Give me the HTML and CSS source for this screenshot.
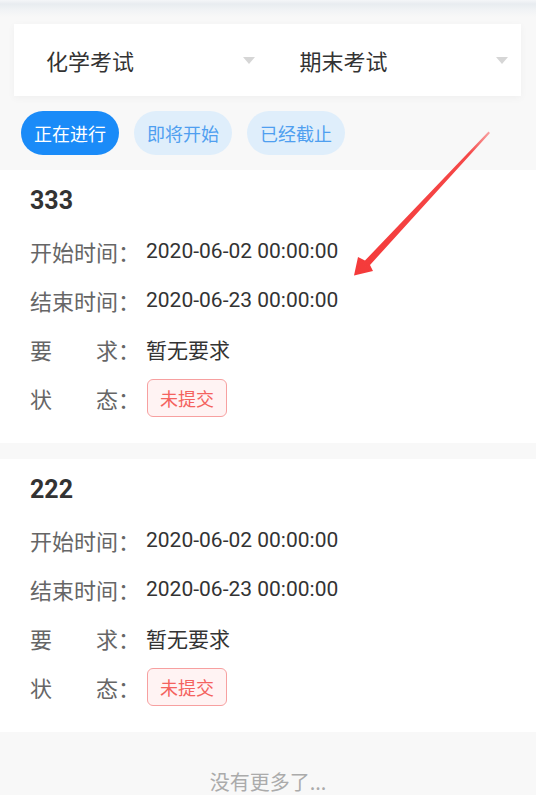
FILE: index.html
```html
<!DOCTYPE html>
<html lang="zh-CN">
<head>
<meta charset="utf-8">
<title>考试列表</title>
<link rel="stylesheet" href="styles.css">
</head>
<body>
<div class="page">
  <div class="filter">
    <div class="select"><span>化学考试</span><i class="caret"></i></div>
    <div class="select"><span>期末考试</span><i class="caret"></i></div>
  </div>
  <div class="tabs">
    <span class="tab active">正在进行</span>
    <span class="tab">即将开始</span>
    <span class="tab">已经截止</span>
  </div>

  <div class="card">
    <div class="title">333</div>
    <div class="rows">
      <div class="row"><span class="label"><span class="name">开始时间</span>：</span><span class="value">2020-06-02 00:00:00</span></div>
      <div class="row"><span class="label"><span class="name">结束时间</span>：</span><span class="value">2020-06-23 00:00:00</span></div>
      <div class="row"><span class="label"><span class="name">要求</span>：</span><span class="value">暂无要求</span></div>
      <div class="row"><span class="label"><span class="name">状态</span>：</span><span class="badge">未提交</span></div>
    </div>
  </div>

  <div class="card">
    <div class="title">222</div>
    <div class="rows">
      <div class="row"><span class="label"><span class="name">开始时间</span>：</span><span class="value">2020-06-02 00:00:00</span></div>
      <div class="row"><span class="label"><span class="name">结束时间</span>：</span><span class="value">2020-06-23 00:00:00</span></div>
      <div class="row"><span class="label"><span class="name">要求</span>：</span><span class="value">暂无要求</span></div>
      <div class="row"><span class="label"><span class="name">状态</span>：</span><span class="badge">未提交</span></div>
    </div>
  </div>

  <div class="more">没有更多了...</div>

  <svg class="arrow" width="536" height="795" viewBox="0 0 536 795" aria-hidden="true">
    <defs>
      <linearGradient id="ag" x1="489" y1="132" x2="354" y2="275" gradientUnits="userSpaceOnUse">
        <stop offset="0" stop-color="#f8a0a0"/>
        <stop offset="0.15" stop-color="#f54848"/>
        <stop offset="1" stop-color="#f43a3a"/>
      </linearGradient>
    </defs>
    <polygon fill="url(#ag)" points="488.5,131.5 490,133 370,265 373,271 354,275.5 358,257 365,260.5"/>
  </svg>
</div>
</body>
</html>
```

FILE: styles.css
```css
html, body {
  margin: 0;
  padding: 0;
}

body {
  background: #f8f8f8 linear-gradient(to bottom, #f4f6f8 0, #e8ecf0 4px, #f1f3f5 10px, #f8f8f8 17px) no-repeat;
  background-size: 100% 20px;
  font-family: "Roboto", "Noto Sans CJK SC", sans-serif;
  color: #333;
}

.page {
  position: relative;
  width: 536px;
  height: 795px;
  overflow: hidden;
  padding-top: 24px;
  box-sizing: border-box;
}

.filter {
  display: flex;
  height: 72px;
  margin: 0 15px 0 14px;
  background: #fff;
  box-shadow: 0 2px 8px rgba(0, 0, 0, 0.04);
}

.select {
  flex: 1;
  display: flex;
  align-items: center;
  justify-content: space-between;
  padding: 0 13px 0 32px;
  font-family: "Noto Sans CJK SC", sans-serif;
  font-size: 22px;
  color: #333;
}

.caret {
  width: 0;
  height: 0;
  border-left: 6px solid transparent;
  border-right: 6px solid transparent;
  border-top: 7px solid #d6d6d6;
  margin-top: 1px;
}

.tabs {
  display: flex;
  gap: 15px;
  padding: 15px 21px;
}

.tab {
  height: 44px;
  line-height: 44px;
  padding: 0 13px;
  border-radius: 22px;
  background: #dfeefb;
  color: #4f9ff0;
  font-family: "Noto Sans CJK SC", sans-serif;
  font-size: 18px;
}

.tab.active {
  background: #1a8bf8;
  color: #fff;
}

.card {
  background: #fff;
  padding: 16px 30px 26px;
  margin-bottom: 16px;
}

.title {
  font-family: "Roboto", sans-serif;
  font-weight: bold;
  font-size: 25px;
  line-height: 30px;
  color: #333;
  margin-bottom: 16px;
}

.rows {
  display: flex;
  flex-direction: column;
  gap: 11px;
}

.row {
  display: flex;
  align-items: center;
  min-height: 38px;
}

.label {
  display: flex;
  font-family: "Noto Sans CJK SC", sans-serif;
  font-size: 22px;
  color: #666;
  white-space: nowrap;
}

.name {
  display: inline-block;
  width: 88px;
  text-align: justify;
  text-align-last: justify;
}

.value {
  margin-left: 6px;
  font-family: "Roboto", "Noto Sans CJK SC", sans-serif;
  font-size: 21px;
  color: #333;
}

.badge {
  margin-left: 7px;
  box-sizing: border-box;
  height: 38px;
  line-height: 36px;
  padding: 0 12px;
  border: 1px solid #f7a0a0;
  border-radius: 6px;
  background: #fff3f3;
  color: #f4625e;
  font-family: "Noto Sans CJK SC", sans-serif;
  font-size: 18px;
}

.more {
  margin-top: 36px;
  text-align: center;
  font-family: "Noto Sans CJK SC", sans-serif;
  font-size: 20px;
  line-height: 28px;
  color: #ababab;
}

.arrow {
  position: absolute;
  top: 0;
  left: 0;
  pointer-events: none;
}
```
